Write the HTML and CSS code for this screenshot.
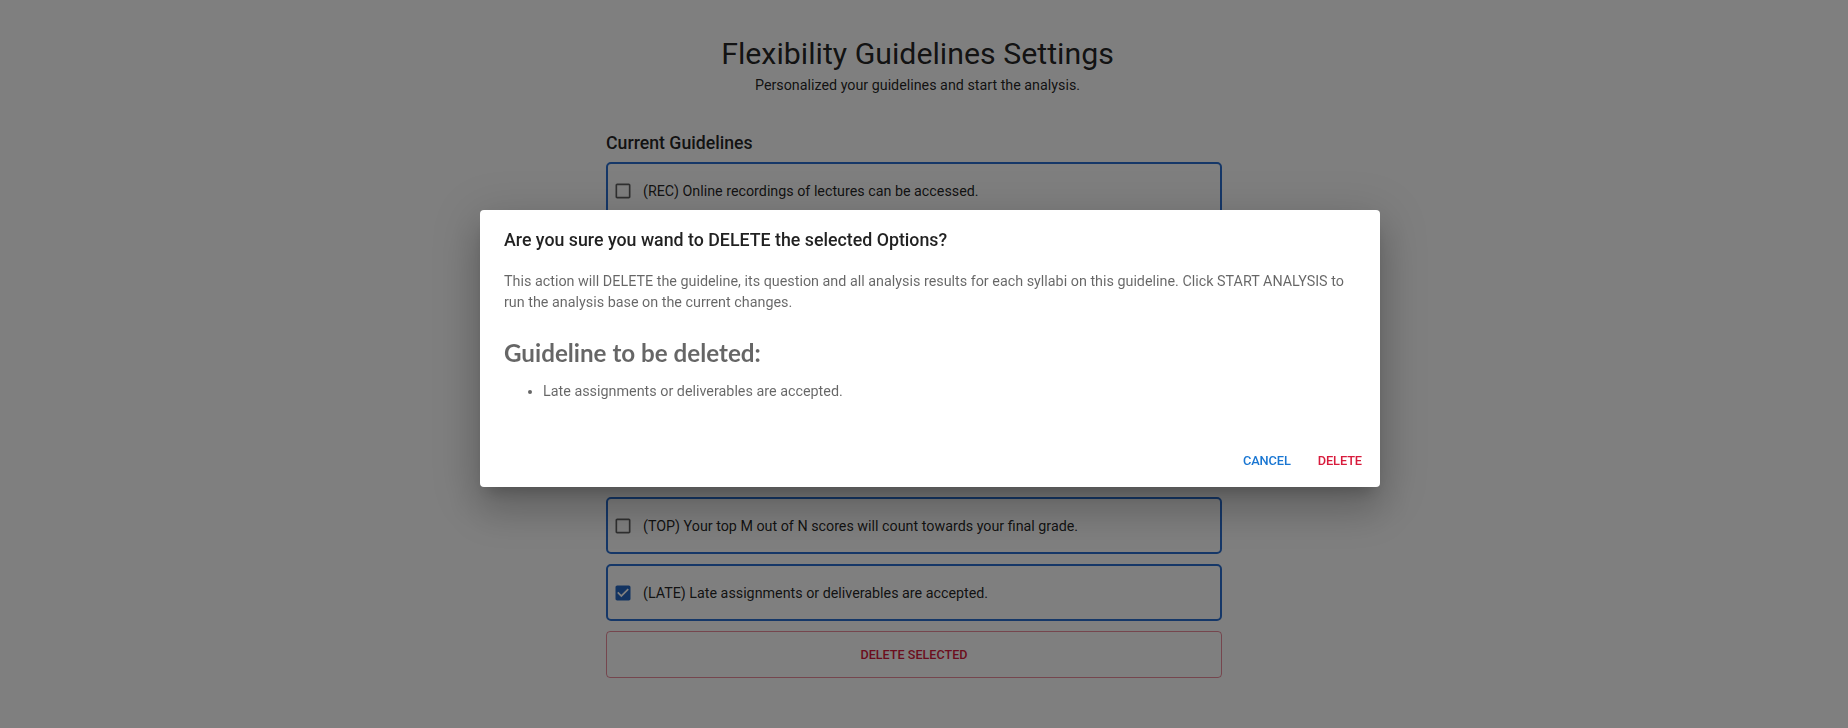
FILE: index.html
```html
<!DOCTYPE html>
<html lang="en">
<head>
<meta charset="utf-8">
<title>Flexibility Guidelines Settings</title>
<link rel="stylesheet" href="styles.css">
</head>
<body>
<div class="page">
  <header class="header">
    <h1 class="title">Flexibility Guidelines Settings</h1>
    <p class="subtitle">Personalized your guidelines and start the analysis.</p>
  </header>
  <div class="content-wrap">
  <main class="content">
    <h2 class="section-title">Current Guidelines</h2>
    <div class="card-list">
      <label class="card">
        <svg class="cb" viewBox="0 0 24 24"><path d="M19 5v14H5V5h14m0-2H5c-1.1 0-2 .9-2 2v14c0 1.1.9 2 2 2h14c1.1 0 2-.9 2-2V5c0-1.1-.9-2-2-2z"/></svg>
        <span class="card-text">(REC) Online recordings of lectures can be accessed.</span>
      </label>
      <label class="card">
        <svg class="cb" viewBox="0 0 24 24"><path d="M19 5v14H5V5h14m0-2H5c-1.1 0-2 .9-2 2v14c0 1.1.9 2 2 2h14c1.1 0 2-.9 2-2V5c0-1.1-.9-2-2-2z"/></svg>
        <span class="card-text">(DROP) The lowest score(s) will be dropped.</span>
      </label>
      <label class="card">
        <svg class="cb" viewBox="0 0 24 24"><path d="M19 5v14H5V5h14m0-2H5c-1.1 0-2 .9-2 2v14c0 1.1.9 2 2 2h14c1.1 0 2-.9 2-2V5c0-1.1-.9-2-2-2z"/></svg>
        <span class="card-text">(EXT) Extensions on deadlines can be requested.</span>
      </label>
      <label class="card">
        <svg class="cb" viewBox="0 0 24 24"><path d="M19 5v14H5V5h14m0-2H5c-1.1 0-2 .9-2 2v14c0 1.1.9 2 2 2h14c1.1 0 2-.9 2-2V5c0-1.1-.9-2-2-2z"/></svg>
        <span class="card-text">(ALT) Alternative assessment options are available.</span>
      </label>
      <label class="card">
        <svg class="cb" viewBox="0 0 24 24"><path d="M19 5v14H5V5h14m0-2H5c-1.1 0-2 .9-2 2v14c0 1.1.9 2 2 2h14c1.1 0 2-.9 2-2V5c0-1.1-.9-2-2-2z"/></svg>
        <span class="card-text">(RE) Resubmissions of assignments are allowed.</span>
      </label>
      <label class="card">
        <svg class="cb" viewBox="0 0 24 24"><path d="M19 5v14H5V5h14m0-2H5c-1.1 0-2 .9-2 2v14c0 1.1.9 2 2 2h14c1.1 0 2-.9 2-2V5c0-1.1-.9-2-2-2z"/></svg>
        <span class="card-text">(TOP) Your top M out of N scores will count towards your final grade.</span>
      </label>
      <label class="card">
        <svg class="cb cb-checked" viewBox="0 0 24 24"><path d="M19 3H5c-1.11 0-2 .9-2 2v14c0 1.1.89 2 2 2h14c1.11 0 2-.9 2-2V5c0-1.1-.89-2-2-2zm-9 14l-5-5 1.41-1.41L10 14.17l7.59-7.59L19 8l-9 9z"/></svg>
        <span class="card-text">(LATE) Late assignments or deliverables are accepted.</span>
      </label>
    </div>
    <button class="delete-selected">Delete Selected</button>
  </main>
  </div>
</div>

<div class="backdrop"></div>

<div class="dialog" role="dialog">
  <h2 class="dialog-title">Are you sure you wand to DELETE the selected Options?</h2>
  <div class="dialog-content">
    <p class="dialog-text">This action will DELETE the guideline, its question and all analysis results for each syllabi on this guideline. Click START ANALYSIS to run the analysis base on the current changes.</p>
    <h3 class="dialog-heading">Guideline to be deleted:</h3>
    <ul class="dialog-list">
      <li>Late assignments or deliverables are accepted.</li>
    </ul>
  </div>
  <div class="dialog-actions">
    <button class="btn btn-cancel">Cancel</button>
    <button class="btn btn-delete">Delete</button>
  </div>
</div>
</body>
</html>
```

FILE: styles.css
```css
* { box-sizing: border-box; }

html, body {
  margin: 0;
  padding: 0;
  background: #ffffff;
  font-family: Roboto, "Liberation Sans", sans-serif;
  color: rgba(0, 0, 0, 0.87);
}

.header {
  text-align: center;
  padding-right: 13px;
}

.title {
  margin: 36px 0 0;
  font-size: 30.3px;
  line-height: 36px;
  font-weight: 400;
}

.subtitle {
  margin: 3px 0 0;
  font-size: 14.3px;
  line-height: 20px;
}

.content-wrap {
  padding-right: 20px;
}

.content {
  width: 616px;
  margin: 0 auto;
}

.section-title {
  margin: 36px 0 7px;
  font-size: 17.7px;
  line-height: 24px;
  font-weight: 500;
}

.card-list {
  display: flex;
  flex-direction: column;
  gap: 10px;
}

.card {
  height: 57px;
  border: 2px solid #2a6fd0;
  border-radius: 5px;
  display: flex;
  align-items: center;
  padding-left: 5px;
}

.cb {
  width: 20px;
  height: 20px;
  fill: rgba(0, 0, 0, 0.62);
  flex: none;
}

.cb-checked {
  fill: #2466c2;
}

.card-text {
  margin-left: 10px;
  font-size: 14.3px;
  line-height: 20px;
}

.delete-selected {
  display: block;
  width: 100%;
  height: 47px;
  margin-top: 10px;
  background: transparent;
  border: 1px solid rgba(216, 27, 60, 0.5);
  border-radius: 4px;
  color: #d81b3c;
  font-family: Roboto, "Liberation Sans", sans-serif;
  font-size: 12.6px;
  font-weight: 500;
  letter-spacing: 0;
  text-transform: uppercase;
}

.backdrop {
  position: fixed;
  inset: 0;
  background: rgba(0, 0, 0, 0.5);
}

.dialog {
  position: absolute;
  left: 480px;
  top: 210px;
  width: 900px;
  background: #ffffff;
  border-radius: 4px;
  box-shadow: 0 11px 15px -7px rgba(0,0,0,0.2), 0 24px 38px 3px rgba(0,0,0,0.14), 0 9px 46px 8px rgba(0,0,0,0.12);
}

.dialog-title {
  margin: 0;
  padding: 16px 24px;
  font-size: 17.8px;
  line-height: 28.8px;
  font-weight: 500;
  color: rgba(0, 0, 0, 0.87);
}

.dialog-content {
  padding: 0 24px 20px;
  color: rgba(0, 0, 0, 0.6);
}

.dialog-text {
  margin: 0;
  font-size: 14.35px;
  line-height: 21px;
}

.dialog-heading {
  margin: 26.5px 0 0;
  font-family: Lato, "Liberation Sans", sans-serif;
  font-size: 24.2px;
  line-height: 28.8px;
  font-weight: 700;
  color: rgba(0, 0, 0, 0.6);
}

.dialog-list {
  margin: 13px 0;
  padding-left: 39px;
  font-size: 14.35px;
  line-height: 21px;
}

.dialog-actions {
  display: flex;
  justify-content: flex-end;
  align-items: center;
  gap: 11px;
  padding: 8px 10px 8px 8px;
}

.btn {
  height: 36px;
  padding: 6px 8px;
  border: 0;
  background: transparent;
  font-family: Roboto, "Liberation Sans", sans-serif;
  font-size: 12.8px;
  font-weight: 500;
  line-height: 24px;
  letter-spacing: -0.1px;
  text-transform: uppercase;
  border-radius: 4px;
}

.btn-cancel { color: #1976d2; }
.btn-delete { color: #d81b3c; }
```
